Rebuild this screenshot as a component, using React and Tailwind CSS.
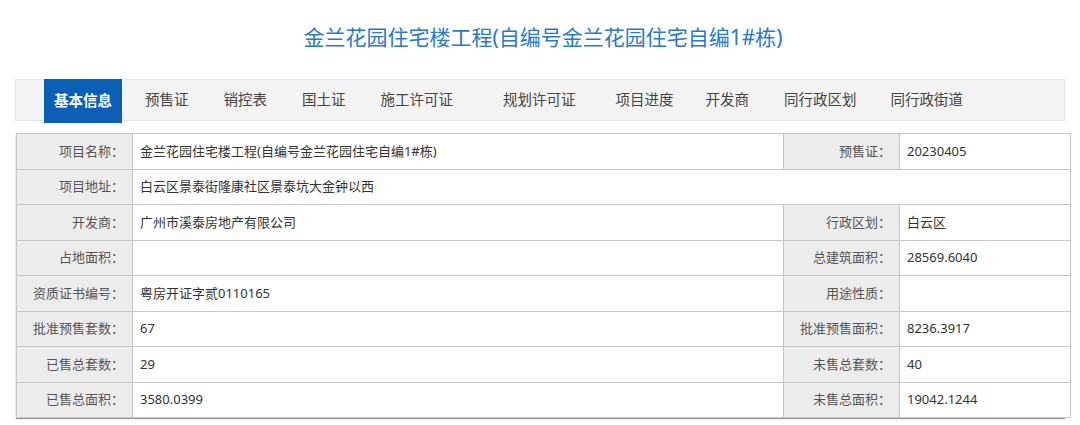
import React from 'react';

const tabs = [
  { name: '基本信息', active: true, cls: 'ml-[28px]' },
  { name: '预售证', cls: 'ml-[23px]' },
  { name: '销控表', cls: 'ml-[35px]' },
  { name: '国土证', cls: 'ml-[35px]' },
  { name: '施工许可证', cls: 'ml-[35px]' },
  { name: '规划许可证', cls: 'ml-[50px]' },
  { name: '项目进度', cls: 'ml-[40px]' },
  { name: '开发商', cls: 'ml-[32px]' },
  { name: '同行政区划', cls: 'ml-[35px]' },
  { name: '同行政街道', cls: 'ml-[34px]' },
];

const rows = [
  ['项目名称：', '金兰花园住宅楼工程(自编号金兰花园住宅自编1#栋)', '预售证：', '20230405'],
  ['项目地址：', '白云区景泰街隆康社区景泰坑大金钟以西'],
  ['开发商：', '广州市溪泰房地产有限公司', '行政区划：', '白云区'],
  ['占地面积：', '', '总建筑面积：', '28569.6040'],
  ['资质证书编号：', '粤房开证字贰0110165', '用途性质：', ''],
  ['批准预售套数：', '67', '批准预售面积：', '8236.3917'],
  ['已售总套数：', '29', '未售总套数：', '40'],
  ['已售总面积：', '3580.0399', '未售总面积：', '19042.1244'],
];

const labelCls = 'border border-[#c6c6c6] bg-[#ececec] text-right pr-[8px] text-[#555] h-[35.5px] p-0';
const valueCls = 'border border-[#c6c6c6] bg-white text-left pl-[7px] text-[#333] h-[35.5px] p-0';

export default function App() {
  return (
    <div
      className="w-[1080px] h-[425px] bg-white overflow-hidden"
      style={{ fontFamily: '"Noto Sans", "Noto Sans CJK SC", sans-serif' }}
    >
      <div className="h-[79px] flex items-center justify-center pl-[6px] pb-[4px]">
        <h1 className="text-[21px] text-[#2878cc] font-normal leading-none">
          金兰花园住宅楼工程(自编号金兰花园住宅自编1#栋)
        </h1>
      </div>

      <div className="px-[15px]">
        <div className="h-[42px] bg-[#f3f3f3] border border-[#e4e4e4] flex items-start">
          {tabs.map((t) =>
            t.active ? (
              <div
                key={t.name}
                className={`${t.cls} h-[44px] -mt-px px-[10px] bg-[#0b60b5] text-white font-bold text-[14.5px] flex items-center`}
              >
                {t.name}
              </div>
            ) : (
              <div
                key={t.name}
                className={`${t.cls} h-[40px] text-[#444] text-[14.5px] flex items-center`}
              >
                {t.name}
              </div>
            )
          )}
        </div>

        <div className="mt-[12px] ml-px shadow-[0_1px_1px_#9a9a9a]">
          <table className="w-[1054px] table-fixed border-collapse text-[13px]">
            <colgroup>
              <col className="w-[116px]" />
              <col className="w-[651px]" />
              <col className="w-[116px]" />
              <col className="w-[171px]" />
            </colgroup>
            <tbody>
              {rows.map((r) => (
                <tr key={r[0]}>
                  <td className={labelCls}>{r[0]}</td>
                  {r.length === 2 ? (
                    <td className={valueCls} colSpan={3}>{r[1]}</td>
                  ) : (
                    <>
                      <td className={valueCls}>{r[1]}</td>
                      <td className={labelCls}>{r[2]}</td>
                      <td className={valueCls}>{r[3]}</td>
                    </>
                  )}
                </tr>
              ))}
            </tbody>
          </table>
        </div>
      </div>
    </div>
  );
}
